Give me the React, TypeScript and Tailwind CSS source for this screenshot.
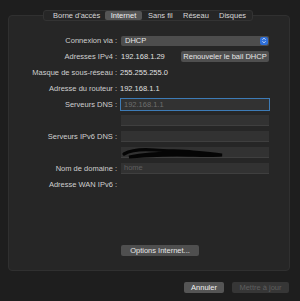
import React from "react";

const font = { fontFamily: '"Liberation Sans", Arial, sans-serif' };

function Label({ children }: { children: React.ReactNode }) {
  return (
    <div className="w-[108px] shrink-0 text-right text-[#cfcfcf] whitespace-nowrap">
      {children}
    </div>
  );
}

function Field({ children, focus }: { children?: React.ReactNode; focus?: boolean }) {
  return (
    <div
      className={
        "relative w-[148px] h-[11px] bg-[#323232] flex items-center pl-[3px] text-[#6b6b6b] " +
        (focus
          ? "outline outline-[1.5px] outline-[#3d7bb6] bg-[#2c2c2c]"
          : "border-b border-[#3f3f3f]")
      }
    >
      {children}
    </div>
  );
}

export default function App() {
  return (
    <div
      className="w-[300px] h-[301px] bg-[#1e1e1e] flex flex-col text-[7.5px] leading-none overflow-hidden"
      style={font}
    >
      <div className="relative z-10 mt-[10px] ml-[43px] w-[210px] h-[11px] rounded-[3px] bg-[#262626] border border-[#333] flex items-center text-[#d6d6d6]">
        <div className="ml-[9px] w-[47px] whitespace-nowrap">Borne d'accès</div>
        <div className="ml-[5px] h-[9px] w-[37px] rounded-[2px] bg-[#555] flex items-center justify-center text-[#eee]">
          Internet
        </div>
        <div className="ml-[6px] w-[30px] whitespace-nowrap">Sans fil</div>
        <div className="ml-[5px] w-[33px]">Réseau</div>
        <div className="ml-[3px]">Disques</div>
      </div>
      <div className="-mt-[6px] ml-[8px] w-[282px] h-[256px] rounded-[4px] bg-[#262626] border border-[#303030] flex flex-col pt-[19px]">
        <div className="flex flex-col gap-[5px]">
          <div className="flex items-center h-[11px]">
            <Label>Connexion via :</Label>
            <div className="ml-[4px] w-[148px] h-[10px] rounded-[2px] bg-[#4d4d4d] flex items-center justify-between pl-[4px] pr-[1px] text-[#e6e6e6]">
              <span>DHCP</span>
              <div className="w-[8px] h-[8px] rounded-[2px] bg-[#2e6fd9] flex items-center justify-center">
                <svg width="6" height="7" viewBox="0 0 6 7">
                  <path d="M1.5 2.7 L3 1.2 L4.5 2.7 M1.5 4.3 L3 5.8 L4.5 4.3" stroke="#fff" strokeWidth="0.8" fill="none" />
                </svg>
              </div>
            </div>
          </div>
          <div className="flex items-center h-[11px]">
            <Label>Adresses IPv4 :</Label>
            <div className="ml-[4px] w-[60px] text-[#e0e0e0]">192.168.1.29</div>
            <div className="w-[88px] h-[11px] rounded-[2px] bg-[#4f4f4f] flex items-center justify-center text-[#e6e6e6] whitespace-nowrap">
              Renouveler le bail DHCP
            </div>
          </div>
          <div className="flex items-center h-[11px]">
            <Label>Masque de sous-réseau :</Label>
            <div className="ml-[3px] text-[#e0e0e0]">255.255.255.0</div>
          </div>
          <div className="flex items-center h-[11px]">
            <Label>Adresse du routeur :</Label>
            <div className="ml-[3px] text-[#e0e0e0]">192.168.1.1</div>
          </div>
          <div className="flex items-center h-[11px]">
            <Label>Serveurs DNS :</Label>
            <div className="ml-[4px]">
              <Field focus>
                <span className="text-[#6e6e6e]">192.168.1.1</span>
              </Field>
            </div>
          </div>
          <div className="flex items-center h-[11px]">
            <div className="w-[108px]" />
            <div className="ml-[4px]">
              <Field />
            </div>
          </div>
          <div className="flex items-center h-[11px]">
            <Label>Serveurs IPv6 DNS :</Label>
            <div className="ml-[4px]">
              <Field />
            </div>
          </div>
          <div className="flex items-center h-[11px]">
            <div className="w-[108px]" />
            <div className="ml-[4px]">
              <Field>
                <svg className="absolute left-0 top-[-1px]" width="104" height="13" viewBox="0 0 104 13">
                  <path
                    d="M3 8 C10 4, 22 3, 34 4 C48 5, 60 5, 72 6 C84 7, 94 8, 101 9 C90 10, 72 9, 56 9 C40 9, 24 10, 8 11 C22 8, 40 7, 56 7 C72 7, 86 8, 98 9"
                    stroke="#050505"
                    strokeWidth="3.2"
                    fill="none"
                    strokeLinecap="round"
                  />
                </svg>
              </Field>
            </div>
          </div>
          <div className="flex items-center h-[11px]">
            <Label>Nom de domaine :</Label>
            <div className="ml-[4px]">
              <Field>
                <span className="text-[#5f5f5f]">home</span>
              </Field>
            </div>
          </div>
          <div className="flex items-center h-[11px]">
            <Label>Adresse WAN IPv6 :</Label>
          </div>
        </div>
        <div className="mt-[55px] ml-[112px] w-[78px] h-[11px] rounded-[2px] bg-[#4f4f4f] flex items-center justify-center text-[#e6e6e6]">
          Options Internet...
        </div>
      </div>
      <div className="mt-[11px] ml-[184px] flex gap-[8px]">
        <div className="w-[40px] h-[11px] rounded-[2px] bg-[#555] flex items-center justify-center text-[#f0f0f0]">
          Annuler
        </div>
        <div className="w-[57px] h-[11px] rounded-[2px] bg-[#363636] flex items-center justify-center text-[#5e5e5e] whitespace-nowrap">
          Mettre à jour
        </div>
      </div>
    </div>
  );
}
